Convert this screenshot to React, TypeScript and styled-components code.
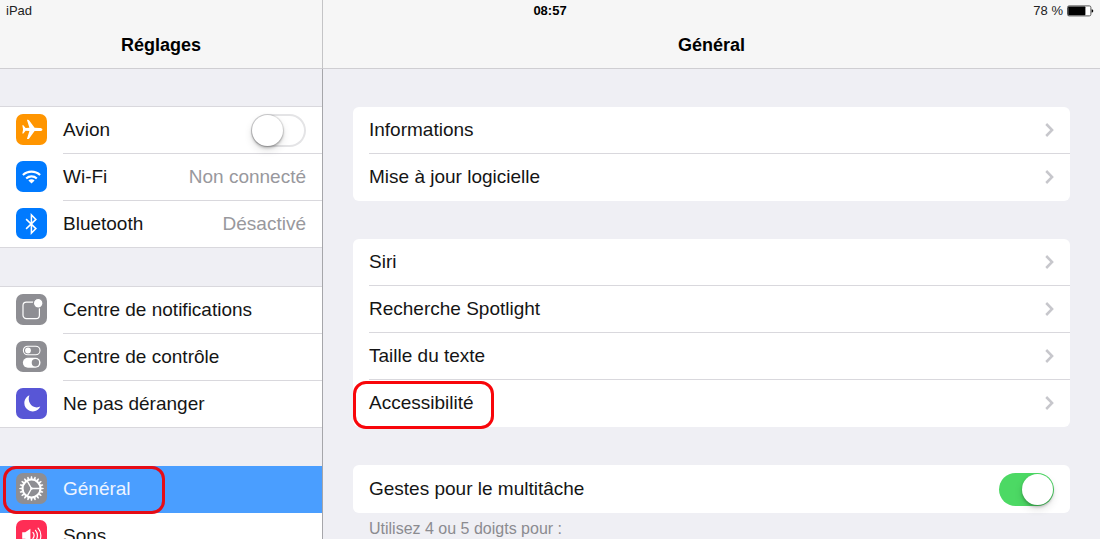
import React, { useState } from "react";
import styled, { createGlobalStyle, css } from "styled-components";

const GlobalStyle = createGlobalStyle`
  * { box-sizing: border-box; }
  body {
    margin: 0;
    background: #efeff4;
    color: #151515;
    font-family: "Liberation Sans", Arial, sans-serif;
    font-size: 19px;
    line-height: 24px;
  }
`;

const line = "#d9d8dd";

const Page = styled.div`
  display: grid;
  grid-template-columns: 323px minmax(0, 1fr);
  height: 100vh;
`;

const StatusBar = styled.div`
  position: absolute;
  top: 0;
  left: 0;
  right: 0;
  z-index: 2;
  display: grid;
  grid-template-columns: 1fr auto 1fr;
  align-items: center;
  height: 22px;
  padding: 0 6px;
  font-size: 13px;
  line-height: 16px;
  color: #222;
`;

const Clock = styled.strong`
  color: #000;
`;

const BatteryStatus = styled.span`
  display: flex;
  align-items: center;
  justify-content: flex-end;
  gap: 4px;
`;

const Pane = styled.div`
  display: flex;
  flex-direction: column;
  min-height: 0;
  min-width: 0;
`;

const PaneHeader = styled.header<{ $divided?: boolean }>`
  flex: none;
  display: flex;
  align-items: center;
  justify-content: center;
  height: 69px;
  padding-top: 22px;
  background: #f6f6f6;
  border-bottom: 1px solid #cfced2;
  border-right: ${(p) => (p.$divided ? "1px solid #c4c4c6" : "none")};
`;

const PaneTitle = styled.h1`
  margin: 0;
  color: #000;
  font-size: 18px;
  line-height: 24px;
`;

const SidebarBody = styled.nav`
  flex: 1;
  display: flex;
  flex-direction: column;
  gap: 38px;
  padding-top: 37px;
  overflow-y: auto;
  scrollbar-width: none;
  border-right: 1px solid #a6a6aa;
`;

const ContentBody = styled.main`
  flex: 1;
  display: flex;
  flex-direction: column;
  gap: 38px;
  padding: 38px 30px 0;
  overflow-y: auto;
  scrollbar-width: none;
`;

const List = styled.ul`
  margin: 0;
  padding: 0;
  list-style: none;
  background: #fff;
`;

const SidebarGroup = styled(List)`
  border-top: 1px solid ${line};
`;

const Card = styled(List)`
  border-radius: 6px;
`;

const Body = styled.span`
  flex: 1;
  display: flex;
  align-items: center;
  justify-content: space-between;
  height: 47px;
  padding-right: 16px;
  border-bottom: 1px solid ${line};
`;

const Item = styled.li<{ $selected?: boolean }>`
  position: relative;
  ${(p) =>
    p.$selected &&
    css`
      margin-top: -1px;
      background: #4a9eff;
      color: #edf4ff;

      ${Body} {
        border-color: transparent;
      }
    `}
`;

const rowStyle = css`
  display: flex;
  align-items: center;
  gap: 16px;
  height: 47px;
  padding-left: 16px;
  color: inherit;
  text-decoration: none;
`;

const SidebarLink = styled.a`
  ${rowStyle}
  ${Item}:last-child & {
    border-bottom: 1px solid ${line};
  }
  ${Item}:last-child & > ${Body} {
    height: 46px;
    border-bottom: none;
  }
`;

const SettingLabel = styled.label`
  ${rowStyle}
`;

const CardLink = styled.a`
  ${rowStyle}
  ${Item}:last-child & > ${Body} {
    border-color: transparent;
  }
`;

const CardLabel = styled.label`
  ${rowStyle}
  height: 48px;
  padding-right: 16px;
  justify-content: space-between;
`;

const Value = styled.span`
  color: #98989d;
`;

const Note = styled.p`
  margin: 4px 16px 0;
  color: #8b8b90;
  font-size: 16px;
  line-height: 24px;
`;

const Switch = styled.input`
  appearance: none;
  flex: none;
  position: relative;
  width: 55px;
  height: 33px;
  margin: 0;
  border-radius: 17px;
  background: #fff;
  box-shadow: inset 0 0 0 2px #e4e4e6;

  &::before {
    content: "";
    position: absolute;
    top: 1px;
    left: 1px;
    width: 31px;
    height: 31px;
    border-radius: 50%;
    background: #fff;
    box-shadow: 0 0 1px 1px rgba(0, 0, 0, 0.12), 0 2px 3px rgba(0, 0, 0, 0.24),
      0 4px 8px rgba(0, 0, 0, 0.12);
  }

  &:checked {
    background: #4cd964;
    box-shadow: none;
  }

  &:checked::before {
    left: 23px;
    box-shadow: 0 2px 3px rgba(0, 0, 0, 0.24), 0 4px 8px rgba(0, 0, 0, 0.12);
  }
`;

const Highlight = styled.span<{ $wide?: boolean }>`
  position: absolute;
  z-index: 1;
  top: 1px;
  bottom: -2px;
  left: 0;
  width: 141px;
  border: 3px solid #f8060a;
  border-radius: 13px;
  pointer-events: none;
  ${(p) =>
    p.$wide &&
    css`
      top: 0;
      bottom: -1px;
      left: 3px;
      width: 162px;
      border-color: #e60c16;
    `}
`;

const Tile = styled.svg<{ $color: string }>`
  flex: none;
  display: block;
  width: 31px;
  height: 31px;
  margin-bottom: 2px;
  border-radius: 7px;
  background: ${(p) => p.$color};
`;

const gray = "#8e8e93";

const PlaneIcon = () => (
  <Tile $color="#ff9500" viewBox="0 0 31 31" aria-hidden>
    <path
      fill="#fff"
      d="M26.4 15.4C26.4 14.4 25.2 13.9 23.4 13.9L18.6 13.8L13.2 6.4Q12.7 5.7 12 5.7H10.9L13.4 13.8L9.6 14.1L7.4 11.2H6.3L7.1 15.4L6.3 19.6H7.4L9.6 16.7L13.4 17L10.9 25.1H12Q12.7 25.1 13.2 24.4L18.6 17L23.4 16.9C25.2 16.9 26.4 16.4 26.4 15.4Z"
    />
  </Tile>
);

const WifiIcon = () => (
  <Tile $color="#007aff" viewBox="0 0 31 31" aria-hidden>
    <g fill="none" stroke="#fff" strokeWidth="2.1">
      <path d="M6.9 14.1A12.4 12.4 0 0 1 24.1 14.1" />
      <path d="M10.2 17.5A7.6 7.6 0 0 1 20.8 17.5" />
    </g>
    <path fill="#fff" d="M15.5 22.5L12.4 19.5A4.4 4.4 0 0 1 18.6 19.5Z" />
  </Tile>
);

const BluetoothIcon = () => (
  <Tile $color="#007aff" viewBox="0 0 31 31" aria-hidden>
    <path
      fill="none"
      stroke="#fff"
      strokeWidth="1.5"
      d="M10.1 11.1L19.9 20.6L15.4 25.1V6.9L19.9 11.4L10.1 20.9"
    />
  </Tile>
);

const NotificationsIcon = () => (
  <Tile $color={gray} viewBox="0 0 31 31" aria-hidden>
    <rect x="7" y="8.2" width="16.4" height="16.4" rx="3.4" fill="none" stroke="#fff" strokeWidth="1.2" />
    <circle cx="22.2" cy="9.2" r="4.8" fill="#fff" stroke={gray} strokeWidth="1.2" />
  </Tile>
);

const ControlIcon = () => (
  <Tile $color={gray} viewBox="0 0 31 31" aria-hidden>
    <rect x="7.4" y="5.2" width="16.6" height="8.6" rx="4.3" fill="none" stroke="#fff" strokeWidth="1.1" />
    <circle cx="12" cy="9.5" r="2.9" fill="#fff" />
    <rect x="6.9" y="16.7" width="17.6" height="10" rx="5" fill="#fff" />
    <circle cx="19.4" cy="21.7" r="3.7" fill={gray} />
  </Tile>
);

const MoonIcon = () => (
  <Tile $color="#5856d6" viewBox="0 0 31 31" aria-hidden>
    <path
      fill="#fff"
      d="M13.4 7.3A8.4 8.4 0 1 0 24.3 18.6A8.1 8.1 0 0 1 20.8 19.4C14.6 19.2 11.2 13 13.4 7.3Z"
    />
  </Tile>
);

const GearIcon = () => (
  <Tile $color={gray} viewBox="0 0 31 31" aria-hidden>
    <g transform="translate(15.5 15.5)" fill="none" stroke="#fff">
      {Array.from({ length: 20 }, (_, i) => (
        <path key={i} d="M9.3 -1.1L12.2 -0.6V0.6L9.3 1.1Z" fill="#fff" stroke="none" transform={`rotate(${i * 18})`} />
      ))}
      <circle r="8.9" strokeWidth="2" />
      <path strokeWidth="1.4" d="M0 0H8.5M0 0L-4.2 -7.3M0 0L-4.2 7.3" />
      <circle r="1.2" fill="#fff" stroke="none" />
    </g>
  </Tile>
);

const SoundIcon = () => (
  <Tile $color="#ff2d55" viewBox="0 0 31 31" aria-hidden>
    <path fill="#fff" d="M6.2 12.3H9.2L14.4 8.8V22.2L9.2 18.7H6.2Z" />
    <g fill="none" stroke="#fff" strokeWidth="1.2" strokeLinecap="round">
      <path d="M16.9 12.4A5 5 0 0 1 16.9 18.6" />
      <path d="M19.5 10.3A8 8 0 0 1 19.5 20.7" />
      <path d="M22.1 8.2A11 11 0 0 1 22.1 22.8" />
    </g>
  </Tile>
);

const Chevron = () => (
  <svg width="9" height="14" viewBox="0 0 9 14" fill="none" stroke="#c7c7cc" strokeWidth="2.5" aria-hidden>
    <path d="M1.2 1L7.1 7L1.2 13" />
  </svg>
);

const Battery = () => (
  <svg width="27" height="12" viewBox="0 0 27 12" aria-label="Batterie">
    <rect x="0.5" y="0.9" width="23.4" height="10" rx="1.6" fill="#fff" stroke="#555" />
    <rect x="1.2" y="1.6" width="17.2" height="8.6" rx="0.6" fill="#000" />
    <path d="M24.6 4.2C26.8 4.4 26.8 7.4 24.6 7.6Z" fill="#000" />
  </svg>
);

type SidebarEntry = {
  label: string;
  icon: React.ReactNode;
  value?: string;
  selected?: boolean;
};

function SidebarRow({ label, icon, value, selected }: SidebarEntry) {
  return (
    <Item $selected={selected}>
      <SidebarLink href="#" aria-current={selected ? "page" : undefined}>
        {icon}
        <Body>
          {label}
          {value && <Value>{value}</Value>}
        </Body>
      </SidebarLink>
      {selected && <Highlight $wide />}
    </Item>
  );
}

function CardRow({ label, highlighted }: { label: string; highlighted?: boolean }) {
  return (
    <Item>
      <CardLink href="#">
        <Body>
          {label}
          <Chevron />
        </Body>
      </CardLink>
      {highlighted && <Highlight />}
    </Item>
  );
}

export default function App() {
  const [airplane, setAirplane] = useState(false);
  const [gestures, setGestures] = useState(true);

  return (
    <>
      <GlobalStyle />
      <StatusBar>
        <span>iPad</span>
        <Clock>08:57</Clock>
        <BatteryStatus>
          78 %
          <Battery />
        </BatteryStatus>
      </StatusBar>
      <Page>
        <Pane>
          <PaneHeader $divided>
            <PaneTitle>Réglages</PaneTitle>
          </PaneHeader>
          <SidebarBody>
            <SidebarGroup>
              <Item>
                <SettingLabel>
                  <PlaneIcon />
                  <Body>
                    Avion
                    <Switch
                      type="checkbox"
                      role="switch"
                      checked={airplane}
                      onChange={(e) => setAirplane(e.target.checked)}
                    />
                  </Body>
                </SettingLabel>
              </Item>
              <SidebarRow label="Wi-Fi" icon={<WifiIcon />} value="Non connecté" />
              <SidebarRow label="Bluetooth" icon={<BluetoothIcon />} value="Désactivé" />
            </SidebarGroup>
            <SidebarGroup>
              <SidebarRow label="Centre de notifications" icon={<NotificationsIcon />} />
              <SidebarRow label="Centre de contrôle" icon={<ControlIcon />} />
              <SidebarRow label="Ne pas déranger" icon={<MoonIcon />} />
            </SidebarGroup>
            <SidebarGroup>
              <SidebarRow label="Général" icon={<GearIcon />} selected />
              <SidebarRow label="Sons" icon={<SoundIcon />} />
            </SidebarGroup>
          </SidebarBody>
        </Pane>
        <Pane>
          <PaneHeader>
            <PaneTitle as="h2">Général</PaneTitle>
          </PaneHeader>
          <ContentBody>
            <Card>
              <CardRow label="Informations" />
              <CardRow label="Mise à jour logicielle" />
            </Card>
            <Card>
              <CardRow label="Siri" />
              <CardRow label="Recherche Spotlight" />
              <CardRow label="Taille du texte" />
              <CardRow label="Accessibilité" highlighted />
            </Card>
            <section>
              <Card>
                <Item>
                  <CardLabel>
                    Gestes pour le multitâche
                    <Switch
                      type="checkbox"
                      role="switch"
                      checked={gestures}
                      onChange={(e) => setGestures(e.target.checked)}
                    />
                  </CardLabel>
                </Item>
              </Card>
              <Note>Utilisez 4 ou 5 doigts pour :</Note>
            </section>
          </ContentBody>
        </Pane>
      </Page>
    </>
  );
}
